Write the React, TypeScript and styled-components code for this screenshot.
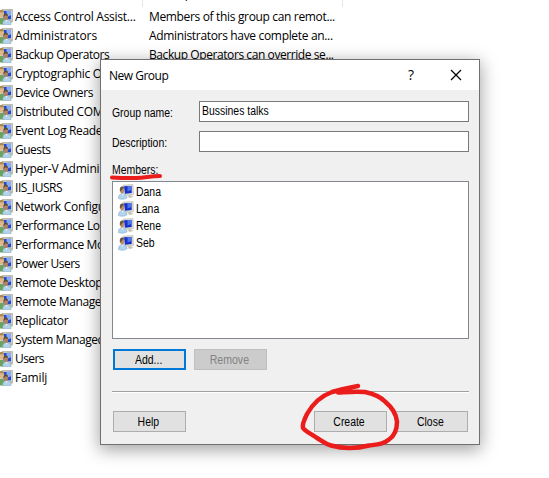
import React from "react";
import styled, { createGlobalStyle } from "styled-components";

const GlobalStyle = createGlobalStyle`
  * { box-sizing: border-box; }
  body { margin: 0; background: #fff; overflow: hidden; }
`;

const Page = styled.div`
  position: relative;
  width: 549px;
  height: 478px;
  overflow: hidden;
  background: #fff;
  color: #000;
  font-family: "Open Sans", "Noto Sans", sans-serif;
  font-size: 12px;
`;

const HeaderStrip = styled.div`
  display: flex;
  height: 7px;
  overflow: hidden;
`;

const HeaderCell = styled.div<{ $width: number }>`
  width: ${(p) => p.$width}px;
  height: 7px;
  border-right: 1px solid #e5e5e5;
  padding-left: 7px;
  line-height: 16px;
  span { display: block; margin-top: -14px; }
`;

const Row = styled.div`
  display: flex;
  align-items: center;
  height: 19px;
  line-height: 19px;
  white-space: nowrap;
`;

const GroupIconSlot = styled.span`
  flex: none;
  width: 13px;
  height: 16px;
  margin-right: 2px;
  overflow: hidden;
  svg { display: block; margin-left: -3px; }
`;

const Name = styled.span<{ $spacing: number }>`
  width: 134px;
  letter-spacing: ${(p) => p.$spacing}px;
`;

const Detail = styled.span<{ $spacing?: number }>`
  letter-spacing: ${(p) => p.$spacing ?? 0}px;
`;

const Dialog = styled.section`
  position: absolute;
  left: 100px;
  top: 59px;
  width: 380px;
  height: 386px;
  border: 1px solid #707070;
  background: #f0f0f0;
  box-shadow: 0 4px 16px 1px rgba(0, 0, 0, 0.36);
  font-family: "Liberation Sans", Arial, sans-serif;
  font-size: 12px;
`;

const TitleBar = styled.header`
  display: flex;
  align-items: center;
  height: 30px;
  padding: 0 17px 0 8px;
  background: #fff;
  font-family: "Open Sans", "Noto Sans", sans-serif;
`;

const Title = styled.span`
  flex: 1;
  letter-spacing: -0.5px;
`;

const HelpMark = styled.span`
  width: 8px;
  margin-right: 34px;
  font-size: 14px;
  line-height: 14px;
`;

const Body = styled.div`
  padding: 11px 10px 0 11px;
`;

/* Condensed dialog face */
const Caption = styled.span<{ $centered?: boolean; $stretch?: number }>`
  display: inline-block;
  white-space: nowrap;
  transform: scaleX(${(p) => p.$stretch ?? 0.87});
  transform-origin: ${(p) => (p.$centered ? "center" : "left")} center;
`;

const Field = styled.label`
  display: flex;
  height: 21px;
  margin-bottom: 9px;
`;

const Label = styled.span`
  width: 87px;
  padding-top: 5px;
  line-height: 14px;
`;

const Input = styled.span`
  flex: 1;
  height: 21px;
  border: 1px solid #7a7a7a;
  background: #fff;
  padding: 2px 2px;
  line-height: 14px;
`;

const MembersLabel = styled.div`
  height: 20px;
  padding-top: 2px;
  line-height: 14px;
`;

const MembersList = styled.div`
  height: 158px;
  border: 1px solid #828790;
  background: #fff;
  padding: 2px 4px;
`;

const Member = styled.div`
  display: flex;
  align-items: center;
  height: 17px;
  line-height: 17px;
  svg { margin: -1px 2px 0 1px; flex: none; }
`;

const Actions = styled.div<{ $top: number }>`
  display: flex;
  gap: 8px;
  margin: ${(p) => p.$top}px 1px 0 1px;
`;

const Button = styled.button<{ $focused?: boolean; $push?: boolean }>`
  width: 73px;
  height: 21px;
  padding: 0 2px 0 0;
  border: ${(p) => (p.$focused ? "2px solid #0078d7" : "1px solid #adadad")};
  border-radius: 0;
  background: #e1e1e1;
  color: #000;
  font: inherit;
  margin-left: ${(p) => (p.$push ? "auto" : "0")};
  &:disabled {
    border-color: #bfbfbf;
    background: #ccc;
    color: #838383;
  }
`;

const Divider = styled.div`
  height: 2px;
  margin-top: 21px;
  border-top: 1px solid #a0a0a0;
  border-bottom: 1px solid #fff;
`;

const Annotations = styled.svg`
  position: absolute;
  inset: 0;
  pointer-events: none;
`;

const GroupIcon = () => (
  <svg width="16" height="16" viewBox="0 0 16 16">
    <path d="M5 .6 15.500 .5v11.500L6 12z" fill="#d3d1c6" stroke="#b0aea4" strokeWidth=".8" />
    <path d="M6.500 2 14 1.800v8.400l-7.500.4z" fill="#2348d4" />
    <path d="M9.500 2 14 1.800v4.400L9.500 8z" fill="#86abf6" />
    <path d="M12.500 11.800h3.200v1.700h-3.200z" fill="#b7b4a3" />
    <path d="M2 15.500V12c0-2 .8-3.300 2.400-3.300S7 10 7 12v3.500z" fill="#6aa45c" />
    <ellipse cx="4.300" cy="5" rx="2.800" ry="3.700" fill="#dcb98c" />
    <path d="M1.500 5C1.200 2.400 2.500 1 4.500 1c1.600 0 2.500.8 2.700 2-1.900.7-3.100.3-3.900.2z" fill="#a88850" />
    <path d="M5.800 15.700v-1.500c0-2.300 1.500-3.400 4-3.400s4.200 1.100 4.200 3.400v1.500z" fill="#b1d3ea" stroke="#7fa5c2" strokeWidth=".5" />
    <ellipse cx="8.800" cy="8.200" rx="2.100" ry="3" fill="#b3855f" />
    <path d="M6.500 8c-.2-2.500.8-3.500 2.300-3.500s2.500 1.100 2.200 2.600l-2.400-.8z" fill="#5f4a33" />
    <path d="m8.500 11 1 2 1-2z" fill="#f2f5f2" />
  </svg>
);

const UserIcon = () => (
  <svg width="16" height="16" viewBox="0 0 16 16">
    <path d="M5 1.200 15 .6l.4 10-9.400.7z" fill="#dcdad1" stroke="#bdbbb3" strokeWidth=".7" />
    <path d="m6 2.300 7.500-.4.200 7.200-6.700.6z" fill="#1430cc" />
    <path d="m9.500 2.100 4-.2.100 4.200-4.100 1.500z" fill="#4c74ea" />
    <path d="m9.500 11.400 3-.4 3 2-4.300.9z" fill="#c4c1b6" />
    <path d="M.5 14.600c-.2-3.200 1.100-4.800 3.700-4.800 2.700 0 4.800 1.700 4.900 4-2 1.600-6.100 1.800-8.600.8" fill="#b2d4ee" stroke="#86aecb" strokeWidth=".6" />
    <ellipse cx="4.100" cy="6.400" rx="1.900" ry="3.100" fill="#b98a66" />
    <path d="M2 7.700C1.400 4 2.400 2.500 4.200 2.500c1.300 0 2 .7 2 1.700-1.300.2-2 .6-2.400 1.700z" fill="#655545" />
    <path d="m3.500 9.900 1.200 1.900 1-1.900z" fill="#f4f8fa" />
  </svg>
);

const groups: { name: string; spacing: number; detail?: string; detailSpacing?: number }[] = [
  { name: "Access Control Assist...", spacing: -0.25, detail: "Members of this group can remot...", detailSpacing: -0.34 },
  { name: "Administrators", spacing: -0.08, detail: "Administrators have complete an...", detailSpacing: -0.33 },
  { name: "Backup Operators", spacing: -0.45, detail: "Backup Operators can override se...", detailSpacing: -0.42 },
  { name: "Cryptographic O", spacing: -0.3 },
  { name: "Device Owners", spacing: -0.42 },
  { name: "Distributed COM", spacing: -0.36 },
  { name: "Event Log Reade", spacing: -0.33 },
  { name: "Guests", spacing: -0.5 },
  { name: "Hyper-V Admini", spacing: -0.22 },
  { name: "IIS_IUSRS", spacing: -0.45 },
  { name: "Network Configu", spacing: -0.27 },
  { name: "Performance Log", spacing: -0.32 },
  { name: "Performance Mo", spacing: -0.35 },
  { name: "Power Users", spacing: -0.5 },
  { name: "Remote Desktop", spacing: -0.4 },
  { name: "Remote Manage", spacing: -0.4 },
  { name: "Replicator", spacing: -0.3 },
  { name: "System Managed", spacing: -0.44 },
  { name: "Users", spacing: -0.6 },
  { name: "Familj", spacing: -0.15 },
];

const members = ["Dana", "Lana", "Rene", "Seb"];

export default function App() {
  return (
    <>
      <GlobalStyle />
      <Page>
        <HeaderStrip>
          <HeaderCell $width={143} />
          <HeaderCell $width={200}><span>Description</span></HeaderCell>
        </HeaderStrip>
        {groups.map((g) => (
          <Row key={g.name}>
            <GroupIconSlot><GroupIcon /></GroupIconSlot>
            <Name $spacing={g.spacing}>{g.name}</Name>
            {g.detail && <Detail $spacing={g.detailSpacing}>{g.detail}</Detail>}
          </Row>
        ))}
        <Dialog>
          <TitleBar>
            <Title>New Group</Title>
            <HelpMark>?</HelpMark>
            <svg width="12" height="12" viewBox="0 0 12 12">
              <path d="m1 1 10 10M11 1 1 11" stroke="#000" strokeWidth="1.2" />
            </svg>
          </TitleBar>
          <Body>
            <Field>
              <Label><Caption>Group name:</Caption></Label>
              <Input><Caption>Bussines talks</Caption></Input>
            </Field>
            <Field>
              <Label><Caption>Description:</Caption></Label>
              <Input />
            </Field>
            <MembersLabel><Caption>Members:</Caption></MembersLabel>
            <MembersList>
              {members.map((m) => <Member key={m}><UserIcon /><Caption>{m}</Caption></Member>)}
            </MembersList>
            <Actions $top={10}>
              <Button $focused><Caption $centered>Add...</Caption></Button>
              <Button disabled><Caption $centered $stretch={0.88}>Remove</Caption></Button>
            </Actions>
            <Divider />
            <Actions $top={18}>
              <Button><Caption $centered>Help</Caption></Button>
              <Button $push><Caption $centered>Create</Caption></Button>
              <Button><Caption $centered>Close</Caption></Button>
            </Actions>
          </Body>
        </Dialog>
        <Annotations width="549" height="478" viewBox="0 0 549 478" fill="none" stroke="#ea1c1c" strokeLinecap="round" strokeLinejoin="round">
          <path d="M112 177.500c8 .5 16 .5 24 .5 9 0 13-1.700 24-2" strokeWidth="4" />
          <path d="M358 386c-8 1.500-19 4-26 6-11 4-20 13-25 22-3 6-5 11-4 14 3 4 9 6 14 10 5 3 8 6 14 7.500 13 3.500 26 3 38 0 8-1 14-1 20-6 6-4 8-11 8-18-1-9-6-15-12-20-6-6-13-8-20-9.500-9-1-18 0-27 .5" strokeWidth="4.500" />
        </Annotations>
      </Page>
    </>
  );
}
